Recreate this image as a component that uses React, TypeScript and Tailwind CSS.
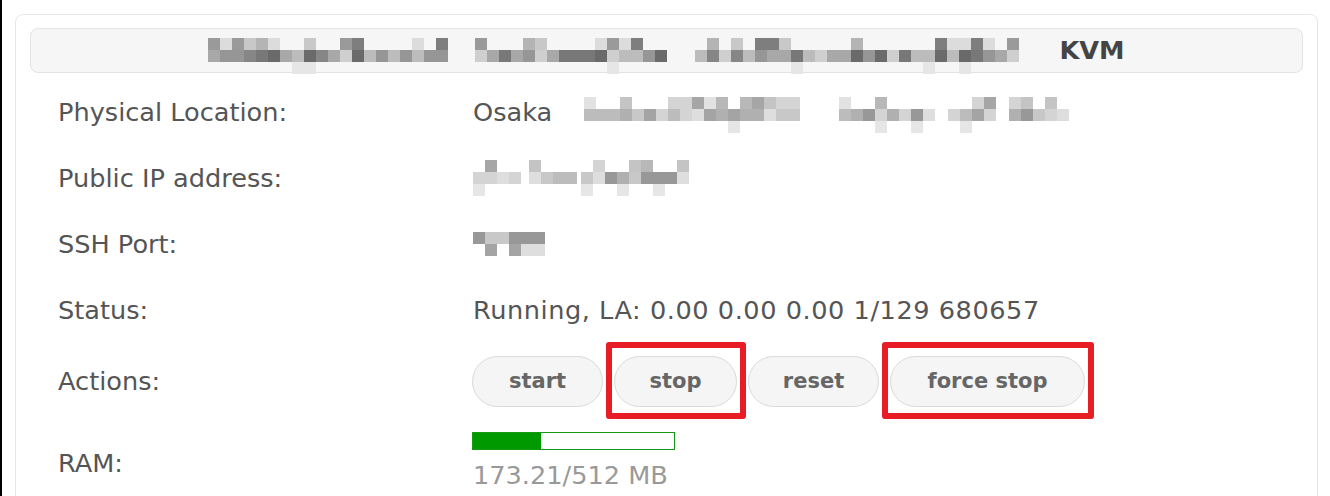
import React from "react";

function rng(seed: number) {
  let s = seed | 0;
  return () => {
    s = (s + 0x6d2b79f5) | 0;
    let t = Math.imul(s ^ (s >>> 15), 1 | s);
    t = (t + Math.imul(t ^ (t >>> 7), 61 | t)) ^ t;
    return ((t ^ (t >>> 14)) >>> 0) / 4294967296;
  };
}

const DARK_TOP = ["#9a9a9a", "#c8c8c8", "#dcdcdc", "#7e7e7e", "#b4b4b4"];
const DARK_MID = ["#6a6a6a", "#787878", "#868686", "#969696", "#a8a8a8", "#bcbcbc", "#cfcfcf"];
const LIGHT_TOP = ["#c4c4c4", "#d4d4d4", "#e2e2e2", "#b8b8b8", "#a6a6a6"];
const LIGHT_MID = ["#a4a4a4", "#b0b0b0", "#bcbcbc", "#c8c8c8", "#d4d4d4", "#dedede", "#989898"];

function Blur({
  segs,
  width,
  rows = 3,
  cell = 12,
  seed,
  tone = "light",
}: {
  segs: [number, number][];
  width: number;
  rows?: number;
  cell?: number;
  seed: number;
  tone?: "light" | "dark";
}) {
  const r = rng(seed);
  const rects: React.ReactNode[] = [];
  const top = tone === "dark" ? DARK_TOP : LIGHT_TOP;
  const mid = tone === "dark" ? DARK_MID : LIGHT_MID;
  segs.forEach(([x, n], si) => {
    for (let i = 0; i < n; i++) {
      for (let row = 0; row < rows; row++) {
        const p = r();
        let fill: string | null = null;
        if (rows === 2) {
          if (row === 0) fill = p < 0.85 ? mid[Math.floor(r() * mid.length)] : null;
          else fill = p < 0.75 ? mid[Math.floor(r() * mid.length)] : null;
        } else if (row === 0) {
          if (p < 0.45) fill = top[Math.floor(r() * top.length)];
        } else if (row === 1) {
          fill = mid[Math.floor(r() * mid.length)];
        } else {
          if (p < 0.15) fill = "#e6e6e6";
        }
        if (fill)
          rects.push(
            <rect
              key={`${si}-${i}-${row}`}
              x={x + i * cell}
              y={row * cell}
              width={cell}
              height={cell}
              fill={fill}
            />
          );
      }
    }
  });
  return (
    <svg width={width} height={rows * cell} shapeRendering="crispEdges" className="block shrink-0">
      {rects}
    </svg>
  );
}

function Row({
  label,
  h,
  children,
}: {
  label: string;
  h: string;
  children: React.ReactNode;
}) {
  return (
    <div className={`flex items-center pl-[28px] ${h}`}>
      <div className="w-[415px] shrink-0 text-[#555]">{label}</div>
      <div className="flex items-center">{children}</div>
    </div>
  );
}

function Btn({ label, w, marked }: { label: string; w: string; marked?: boolean }) {
  return (
    <div className="relative">
      <button
        className={`flex h-[51px] items-center justify-center rounded-full border border-[#dadada] bg-[#f5f5f5] text-[21px] font-bold text-[#666] ${w}`}
      >
        {label}
      </button>
      {marked && (
        <div className="pointer-events-none absolute -left-[8px] -right-[9px] -top-[14px] -bottom-[12px] rounded-[3px] border-[6px] border-[#e81c25]" />
      )}
    </div>
  );
}

export default function App() {
  const used = 173.21;
  const total = 512;
  return (
    <div className="min-h-screen border-l-2 border-black bg-white pl-[13px] pr-[12px] pt-[14px] font-['DejaVu_Sans',sans-serif] text-[25.6px] text-[#555]">
      <div className="h-[560px] rounded-lg border border-[#e6e6e6] px-[14px] pt-[13px]">
        <div className="flex h-[45px] items-center justify-center rounded-lg border border-[#e3e3e3] bg-[#f6f6f6]">
          <div className="mt-[11px]">
            <Blur
              width={824}
              seed={7}
              tone="dark"
              segs={[
                [0, 20],
                [267, 16],
                [487, 27],
              ]}
            />
          </div>
          <div className="ml-[27px] font-bold text-[#444]">KVM</div>
        </div>

        <div className="mt-[6px]">
          <Row label="Physical Location:" h="h-[66px]">
            <span>Osaka</span>
            <div className="ml-[32px] mt-[6px]">
              <Blur
                width={487}
                seed={21}
                segs={[
                  [0, 18],
                  [255, 8],
                  [364, 4],
                  [425, 5],
                ]}
              />
            </div>
          </Row>
          <Row label="Public IP address:" h="h-[66px]">
            <Blur
              width={216}
              seed={33}
              segs={[
                [0, 4],
                [56, 4],
                [108, 9],
              ]}
            />
          </Row>
          <Row label="SSH Port:" h="h-[66px]">
            <Blur width={72} seed={45} rows={2} segs={[[0, 6]]} />
          </Row>
          <Row label="Status:" h="h-[66px]">
            <span className="tracking-[0.55px]">Running, LA: 0.00 0.00 0.00 1/129 680657</span>
          </Row>
          <Row label="Actions:" h="h-[77px]">
            <div className="flex gap-[11px] -ml-[1px]">
              <Btn label="start" w="w-[131px]" />
              <Btn label="stop" w="w-[123px]" marked />
              <Btn label="reset" w="w-[131px]" />
              <Btn label="force stop" w="w-[195px]" marked />
            </div>
          </Row>
          <Row label="RAM:" h="h-[86px]">
            <div className="flex flex-col">
              <div className="-ml-[1px] h-[18px] w-[203px] border border-[#169a16] bg-white">
                <div className="h-full bg-[#009900]" style={{ width: `${(used / total) * 100}%` }} />
              </div>
              <div className="mt-[6px] text-[#999]">173.21/512 MB</div>
            </div>
          </Row>
        </div>
      </div>
    </div>
  );
}
